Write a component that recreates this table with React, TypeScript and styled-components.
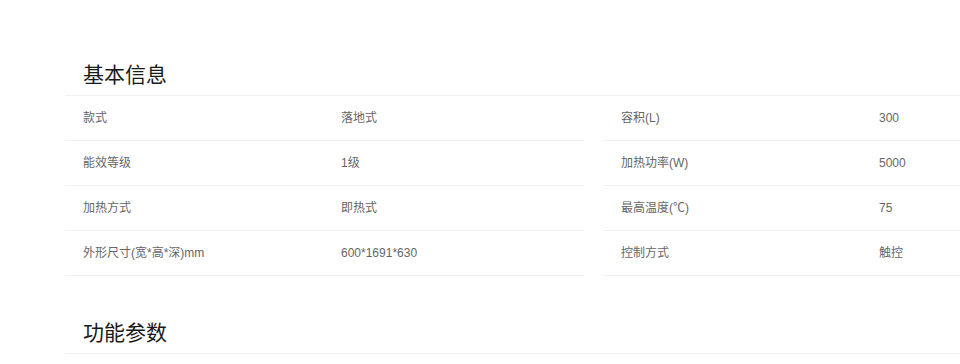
import * as React from 'react';
import styled, { createGlobalStyle } from 'styled-components';

const GlobalStyle = createGlobalStyle`
    body {
        margin: 0;
        background: #fff;
        overflow: hidden;
        font-family: "Liberation Sans", "Noto Sans CJK SC", sans-serif;
    }
`;

const Page = styled.div`
    margin-left: 65px;
`;

const Section = styled.section<{ first?: boolean }>`
    padding-top: ${(p) => (p.first ? '60px' : '42px')};
`;

const Title = styled.h2`
    margin: 0;
    padding: 0 18px 5px;
    font-size: 21px;
    line-height: 30px;
    font-weight: 400;
    color: #1a1a1a;
    border-bottom: 1px solid #f0f0f0;
`;

const Columns = styled.div`
    display: grid;
    grid-template-columns: 519px 1fr;
    column-gap: 19px;
`;

const Row = styled.div`
    display: flex;
    align-items: center;
    height: 44px;
    border-bottom: 1px solid #f2f2f2;
    font-size: 12px;
    line-height: 18px;
    color: #666;
`;

const Cell = styled.div<{ label?: boolean }>`
    padding-left: 18px;
    width: ${(p) => (p.label ? '258px' : 'auto')};
    flex: ${(p) => (p.label ? 'none' : '1')};
    box-sizing: border-box;
    white-space: nowrap;
    height: 18px;
`;

type Spec = [string, string];

const left: Spec[] = [
    ['款式', '落地式'],
    ['能效等级', '1级'],
    ['加热方式', '即热式'],
    ['外形尺寸(宽*高*深)mm', '600*1691*630'],
];

const right: Spec[] = [
    ['容积(L)', '300'],
    ['加热功率(W)', '5000'],
    ['最高温度(℃)', '75'],
    ['控制方式', '触控'],
];

const SpecTable: React.FC<{ rows: Spec[] }> = ({ rows }) => (
    <div>
        {rows.map(([k, v]) => (
            <Row key={k}>
                <Cell label>{k}</Cell>
                <Cell>{v}</Cell>
            </Row>
        ))}
    </div>
);

const App: React.FC = () => {
    return (
        <>
            <GlobalStyle />
            <Page>
                <Section first>
                    <Title>基本信息</Title>
                    <Columns>
                        <SpecTable rows={left} />
                        <SpecTable rows={right} />
                    </Columns>
                </Section>
                <Section>
                    <Title>功能参数</Title>
                </Section>
            </Page>
        </>
    );
};

export default App;
